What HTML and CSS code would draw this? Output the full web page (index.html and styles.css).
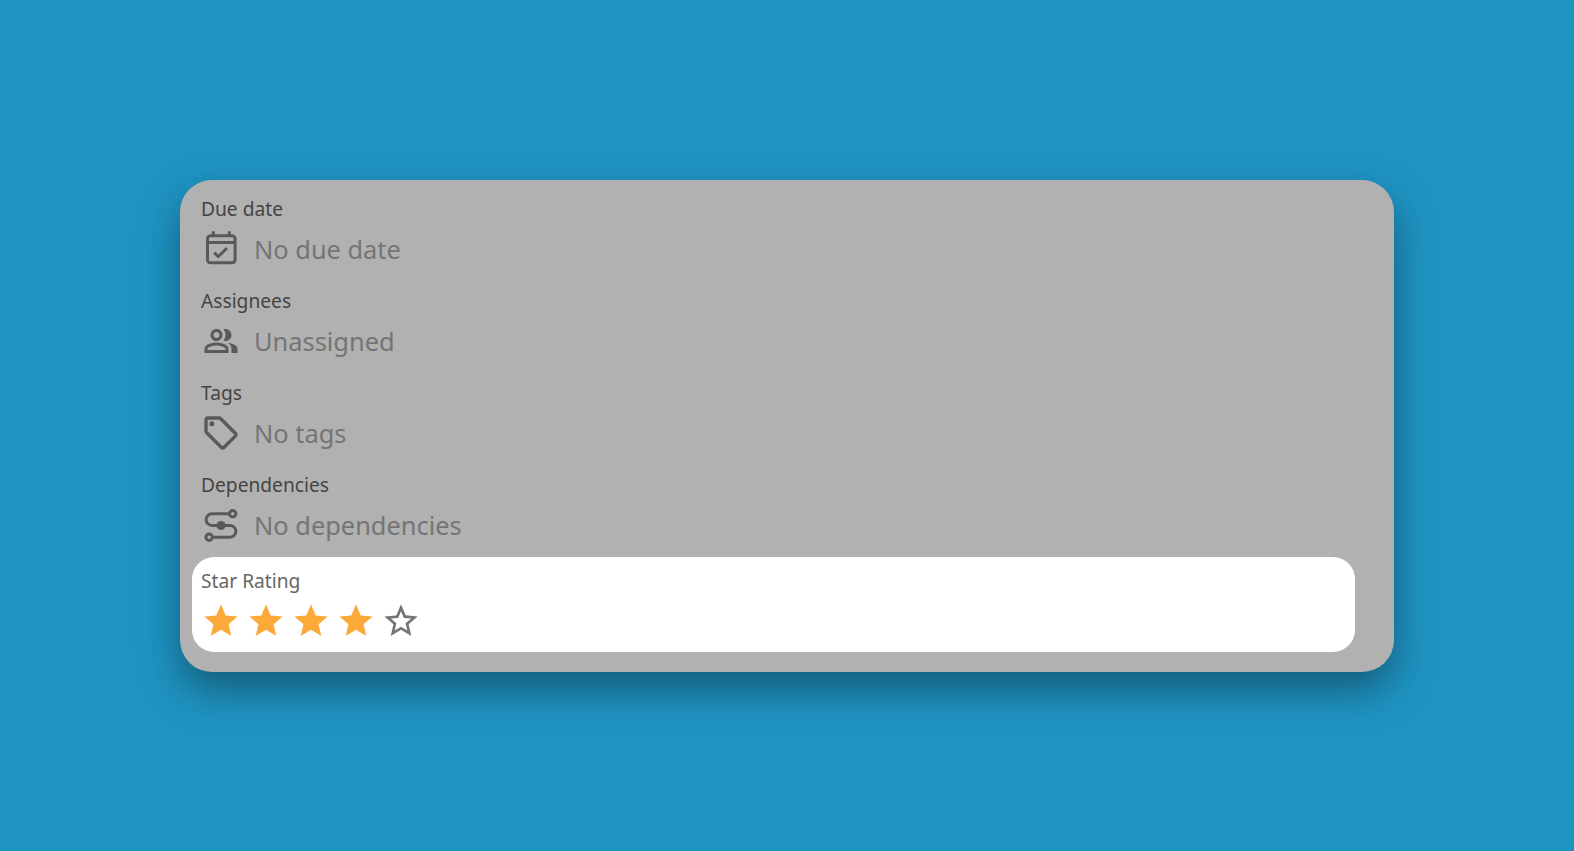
FILE: index.html
```html
<!DOCTYPE html>
<html lang="en">
<head>
  <meta charset="UTF-8" />
  <title>Task details</title>
  <link rel="stylesheet" href="styles.css">
</head>
<body>
  <div class="card">
    <div class="row">
      <div class="label">Due date</div>
      <div class="value">
        <svg class="icon" viewBox="0 0 40 40">
          <rect class="line" x="6.5" y="6.8" width="27.6" height="27" rx="3"/>
          <path class="line" d="M6.5 13.6H34.1M12.3 2.2V6.8M28.3 2.2V6.8"/>
          <path class="line" d="M13.2 23.7L17.3 27.5L26 19"/>
        </svg>
        <span class="value-text">No due date</span>
      </div>
    </div>
    <div class="row">
      <div class="label">Assignees</div>
      <div class="value">
        <svg class="icon" viewBox="-1.33 -1.33 26.67 26.67"><path d="M16.67 13.13C18.04 14.06 19 15.32 19 17v3h4v-3c0-2.18-3.57-3.47-6.33-3.87z"/><path d="M15 12c2.21 0 4-1.79 4-4s-1.79-4-4-4c-.47 0-.91.1-1.33.24C14.5 5.27 15 6.58 15 8s-.5 2.73-1.33 3.76c.42.14.86.24 1.33.24z"/><path d="M9 12c2.21 0 4-1.79 4-4s-1.79-4-4-4-4 1.79-4 4 1.79 4 4 4zm0-6c1.1 0 2 .9 2 2s-.9 2-2 2-2-.9-2-2 .9-2 2-2z"/><path d="M9 13c-2.67 0-8 1.34-8 4v3h16v-3c0-2.66-5.33-4-8-4zm6 5H3v-.99C3.2 16.29 6.3 15 9 15s5.8 1.29 6 2v1z"/></svg>
        <span class="value-text">Unassigned</span>
      </div>
    </div>
    <div class="row">
      <div class="label">Tags</div>
      <div class="value">
        <svg class="icon" viewBox="0 0 24 24"><path d="M21.41 11.58l-9-9C12.05 2.22 11.55 2 11 2H4c-1.1 0-2 .9-2 2v7c0 .55.22 1.05.59 1.42l9 9c.36.36.86.58 1.41.58s1.05-.22 1.41-.59l7-7c.37-.36.59-.86.59-1.41s-.23-1.06-.59-1.42zM13 20.01L4 11V4h7v-.01l9 9-7 7.02z"/><circle cx="6.5" cy="6.5" r="1.5"/></svg>
        <span class="value-text">No tags</span>
      </div>
    </div>
    <div class="row">
      <div class="label">Dependencies</div>
      <div class="value">
        <svg class="icon" viewBox="0 0 40 40">
          <path class="line" d="M28.5 8.8H11a5.85 5.85 0 0 0 0 11.7H29a5.85 5.85 0 0 1 0 11.7H11.3"/>
          <circle class="line" cx="31.7" cy="8.8" r="3.2"/>
          <circle class="line" cx="8.1" cy="32.2" r="3.2"/>
          <circle cx="20" cy="20.5" r="4.6"/>
        </svg>
        <span class="value-text">No dependencies</span>
      </div>
    </div>
    <div class="row row-active">
      <div class="label">Star Rating</div>
      <div class="stars">
        <svg class="star" viewBox="0 0 24 24"><path d="M12 17.27L18.18 21l-1.64-6.99L22 9.24l-7.19-.61L12 2 9.19 8.63 2 9.24l5.46 4.77L5.82 21z"/></svg>
        <svg class="star" viewBox="0 0 24 24"><path d="M12 17.27L18.18 21l-1.64-6.99L22 9.24l-7.19-.61L12 2 9.19 8.63 2 9.24l5.46 4.77L5.82 21z"/></svg>
        <svg class="star" viewBox="0 0 24 24"><path d="M12 17.27L18.18 21l-1.64-6.99L22 9.24l-7.19-.61L12 2 9.19 8.63 2 9.24l5.46 4.77L5.82 21z"/></svg>
        <svg class="star" viewBox="0 0 24 24"><path d="M12 17.27L18.18 21l-1.64-6.99L22 9.24l-7.19-.61L12 2 9.19 8.63 2 9.24l5.46 4.77L5.82 21z"/></svg>
        <svg class="star star-empty" viewBox="0 0 24 24"><path d="M22 9.24l-7.19-.62L12 2 9.19 8.63 2 9.24l5.46 4.73L5.82 21 12 17.27 18.18 21l-1.63-7.03L22 9.24zM12 15.4l-3.76 2.27 1-4.28-3.32-2.88 4.38-.38L12 6.1l1.71 4.04 4.38.38-3.32 2.88 1 4.28L12 15.4z"/></svg>
      </div>
    </div>
  </div>
</body>
</html>
```

FILE: styles.css
```css
* {
  margin: 0;
  padding: 0;
  box-sizing: border-box;
}
html, body {
  height: 100%;
  overflow: hidden;
}
body {
  display: flex;
  justify-content: center;
  align-items: center;
  background-color: #1f94c3;
  font-family: "Noto Sans", "Open Sans", sans-serif;
}
.card {
  width: 1214px;
  height: 492px;
  padding: 9.5px 39px 19.5px 12px;
  background-color: #b1b1b1;
  border-radius: 32px;
  box-shadow: 0 18px 40px rgba(0, 0, 0, 0.38);
}
.row {
  height: 92px;
  padding: 8px 9px 12px;
}
.row-active {
  height: 95px;
  padding: 12px 9px 11px;
  background-color: #fff;
  border-radius: 22px;
}
.label {
  height: 24px;
  margin-bottom: 8px;
  font-size: 19.2px;
  line-height: 24px;
  color: #454545;
}
.row-active .label {
  color: #666;
}
.value {
  display: flex;
  align-items: center;
  gap: 13px;
}
.value-text {
  font-size: 25.4px;
  line-height: 40px;
  color: #757575;
}
.icon {
  width: 40px;
  height: 40px;
  flex: none;
  fill: #595959;
}
.icon .line {
  fill: none;
  stroke: #595959;
  stroke-width: 3;
}
.stars {
  display: flex;
  gap: 5px;
}
.star {
  width: 40px;
  height: 40px;
  fill: #fbaa3a;
}
.star-empty {
  fill: #757575;
}
```
